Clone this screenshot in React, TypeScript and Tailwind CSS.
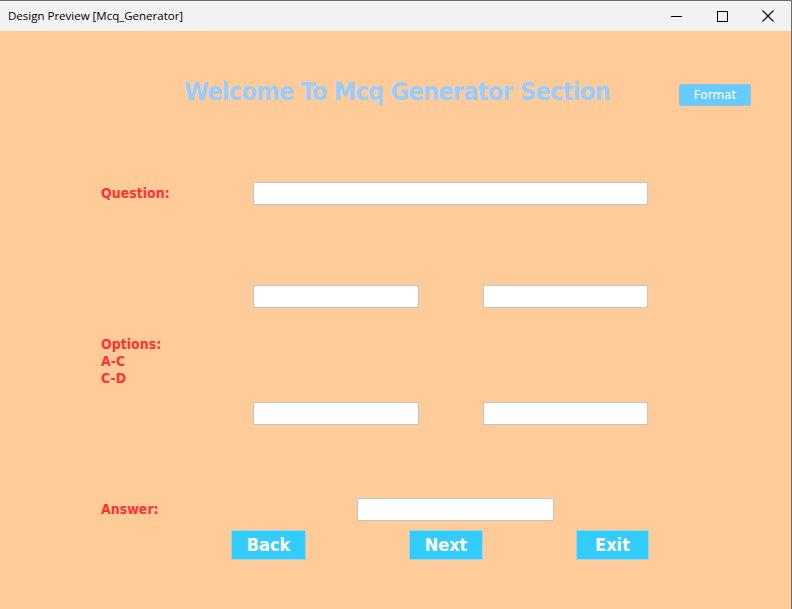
import React from "react";

const labelFont = { fontFamily: '"DejaVu Sans Condensed", "DejaVu Sans", Verdana, sans-serif' };

function Field({ width }: { width: string }) {
  return (
    <input
      type="text"
      className={`h-[23px] ${width} border border-[#c4c4c4] bg-white outline-none`}
    />
  );
}

function ActionButton({ label, width }: { label: string; width: string }) {
  return (
    <button
      className={`h-[30px] ${width} border border-[#9fd3e6] bg-[#33ccff] text-[18px] font-bold leading-none text-white`}
      style={labelFont}
    >
      {label}
    </button>
  );
}

export default function App() {
  return (
    <div className="flex h-[609px] w-[792px] flex-col overflow-hidden border-t border-r border-[#6d6d6d] bg-[#ffcc99]">
      {/* window title bar */}
      <div className="flex h-[30px] shrink-0 items-center justify-between bg-[#f2f2f2] pl-2">
        <span
          className="text-[11.5px] text-black"
          style={{ fontFamily: '"Open Sans", "Noto Sans", sans-serif' }}
        >
          Design Preview [Mcq_Generator]
        </span>
        <div className="flex h-full items-center">
          <span className="flex h-full w-[46px] items-center justify-center">
            <span className="block h-px w-[11px] bg-black" />
          </span>
          <span className="flex h-full w-[46px] items-center justify-center">
            <span className="block h-[11px] w-[11px] border border-black" />
          </span>
          <span className="flex h-full w-[46px] items-center justify-center">
            <svg width="12" height="12" viewBox="0 0 12 12" stroke="black" strokeWidth="1.1">
              <path d="M0.5 0.5 L11.5 11.5 M11.5 0.5 L0.5 11.5" />
            </svg>
          </span>
        </div>
      </div>

      {/* form body */}
      <div className="flex flex-1 flex-col">
        <div className="mt-[46px] flex h-[30px] items-center">
          <h1
            className="ml-[184px] w-[426px] whitespace-nowrap text-[25px] font-bold tracking-[-0.7px] text-[#99ccff]"
            style={{ fontFamily: '"DejaVu Sans Condensed", "DejaVu Sans", sans-serif' }}
          >
            Welcome To Mcq Generator Section
          </h1>
          <button
            className="ml-[69px] mt-[5px] h-[22px] w-[72px] rounded-[2px] border border-[#8fc4e0] bg-[#66ccff] text-[12px] text-white"
            style={{ fontFamily: '"DejaVu Sans", sans-serif' }}
          >
            Format
          </button>
        </div>

        <div className="mt-[75px] flex items-center">
          <span className="ml-[101px] w-[152px] text-[14px] font-bold text-[#ff3333]" style={labelFont}>
            Question:
          </span>
          <Field width="w-[395px]" />
        </div>

        <div className="mt-[80px] flex gap-[64px] pl-[253px]">
          <Field width="w-[166px]" />
          <Field width="w-[165px]" />
        </div>

        <div
          className="mt-[28px] ml-[101px] flex flex-col text-[14px] font-bold leading-[17px] text-[#ff3333]"
          style={labelFont}
        >
          <span>Options:</span>
          <span>A-C</span>
          <span>C-D</span>
        </div>

        <div className="mt-[15px] flex gap-[64px] pl-[253px]">
          <Field width="w-[166px]" />
          <Field width="w-[165px]" />
        </div>

        <div className="mt-[73px] flex items-center">
          <span className="ml-[101px] w-[256px] text-[14px] font-bold text-[#ff3333]" style={labelFont}>
            Answer:
          </span>
          <Field width="w-[197px]" />
        </div>

        <div className="mt-[9px] flex pl-[231px]">
          <ActionButton label="Back" width="w-[75px]" />
          <div className="ml-[103px]">
            <ActionButton label="Next" width="w-[74px]" />
          </div>
          <div className="ml-[93px]">
            <ActionButton label="Exit" width="w-[73px]" />
          </div>
        </div>
      </div>
    </div>
  );
}
